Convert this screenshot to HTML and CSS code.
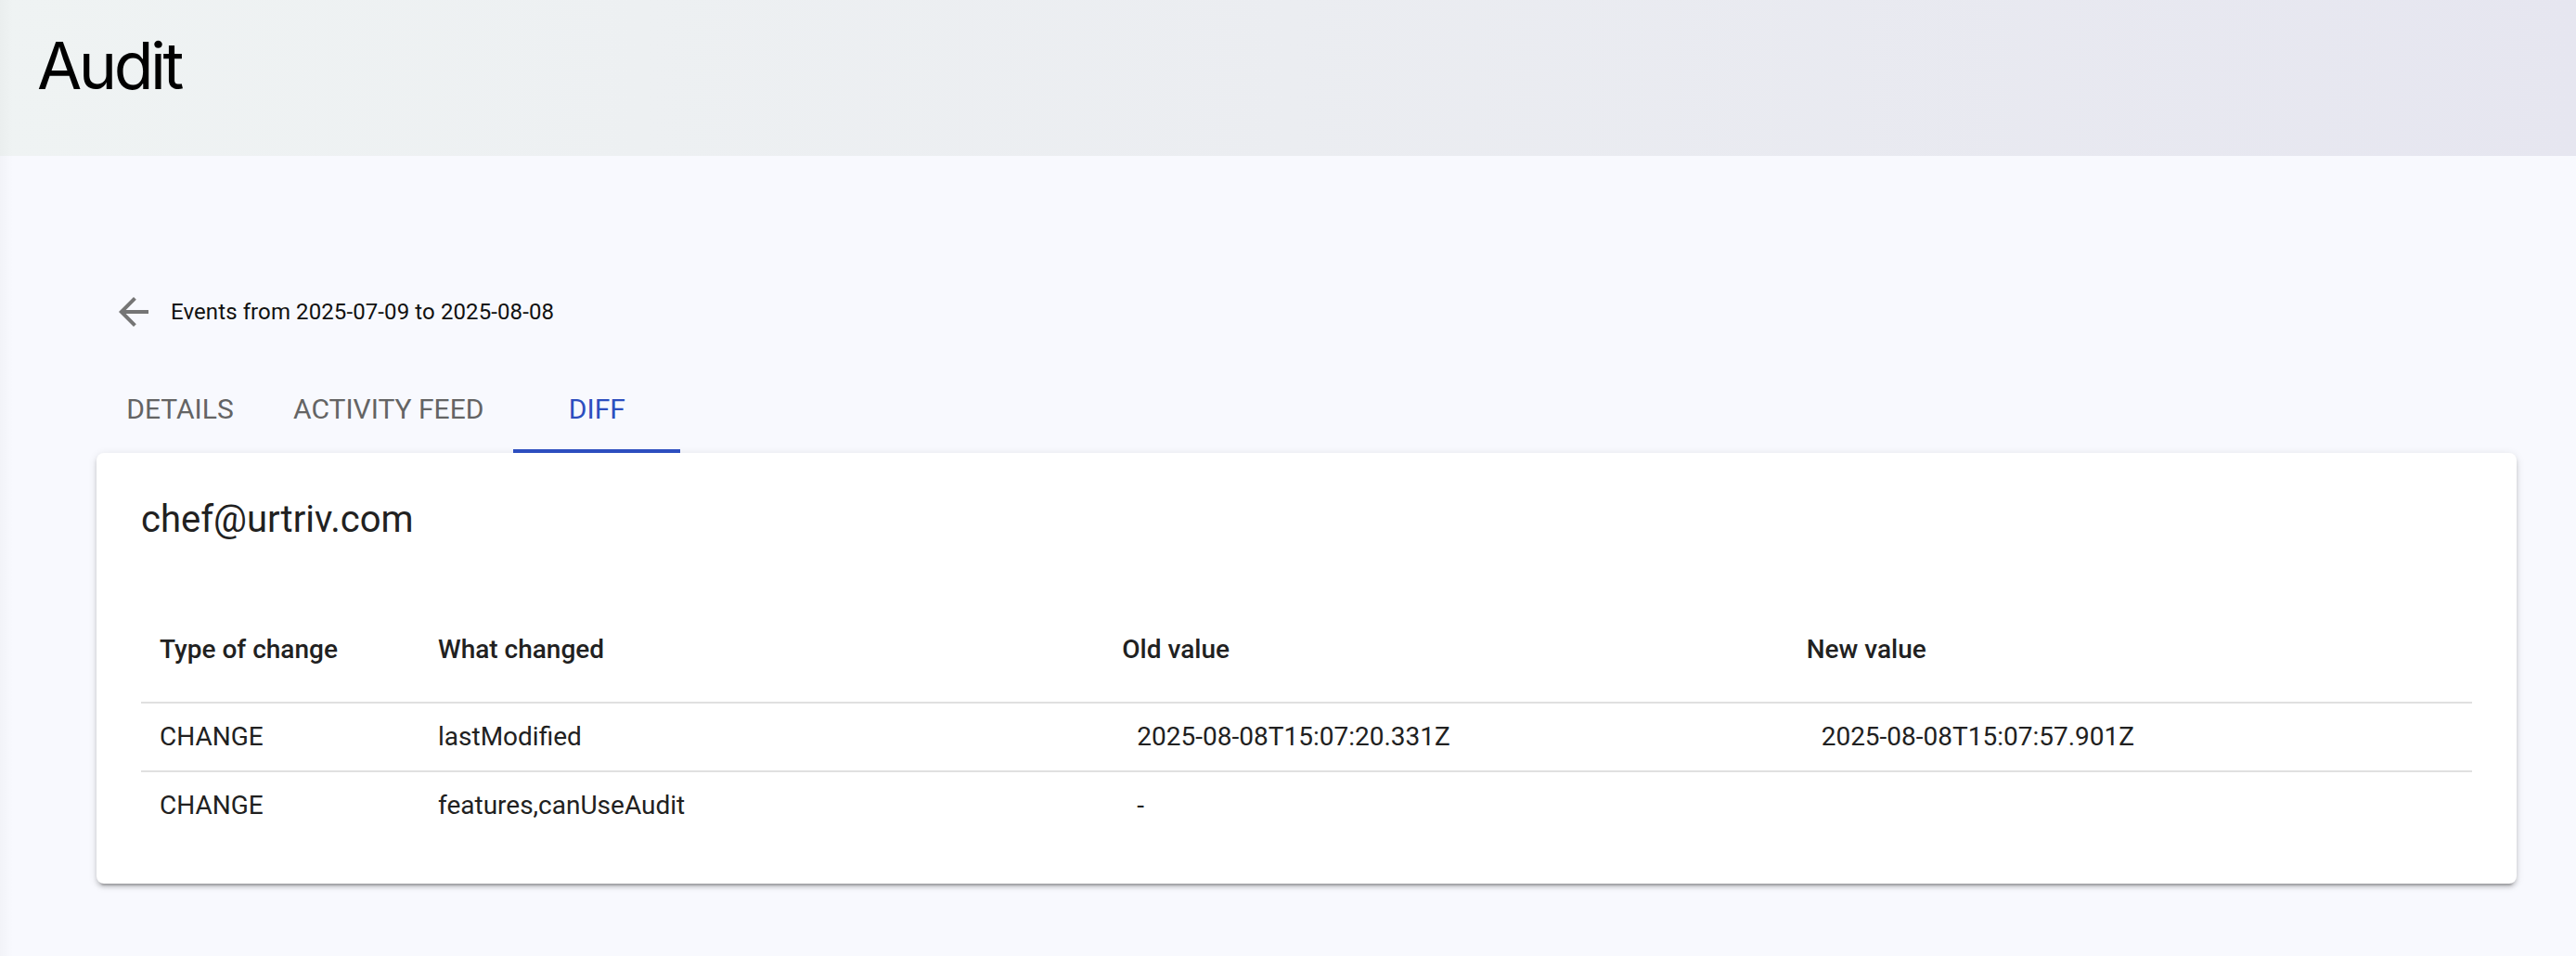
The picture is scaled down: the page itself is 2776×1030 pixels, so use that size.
FILE: index.html
```html
<!DOCTYPE html>
<html lang="en">
<head>
	<meta charset="UTF-8">
	<title>Audit</title>
	<link rel="stylesheet" href="styles.css">
</head>
<body>
	<!-- page header -->
	<header class="page-header">
		<h1 class="page-title">Audit</h1>
	</header>

	<main class="content">
		<!-- back link + date range -->
		<div class="back-row">
			<a class="back-btn" href="#">
				<svg viewBox="0 0 24 24" width="48" height="48"><path d="M20 11H7.83l5.59-5.59L12 4l-8 8 8 8 1.41-1.41L7.83 13H20v-2z"/></svg>
			</a>
			<span class="range">Events from 2025-07-09 to 2025-08-08</span>
		</div>

		<!-- tabs -->
		<nav class="tabs">
			<a class="tab" href="#">DETAILS</a>
			<a class="tab" href="#">ACTIVITY FEED</a>
			<a class="tab active" href="#">DIFF</a>
		</nav>

		<!-- diff card -->
		<section class="card">
			<h2 class="card-title">chef@urtriv.com</h2>
			<table class="diff-table">
				<colgroup>
					<col class="col-type">
					<col>
					<col>
					<col>
				</colgroup>
				<thead>
					<tr>
						<th>Type of change</th>
						<th>What changed</th>
						<th>Old value</th>
						<th>New value</th>
					</tr>
				</thead>
				<tbody>
					<tr>
						<td>CHANGE</td>
						<td>lastModified</td>
						<td><span class="value">2025-08-08T15:07:20.331Z</span></td>
						<td><span class="value">2025-08-08T15:07:57.901Z</span></td>
					</tr>
					<tr>
						<td>CHANGE</td>
						<td>features,canUseAudit</td>
						<td><span class="value">-</span></td>
						<td><span class="value"></span></td>
					</tr>
				</tbody>
			</table>
		</section>
	</main>
</body>
</html>
```

FILE: styles.css
```css
body{
	margin:0;
	padding:0;
	font-family: Roboto, "Liberation Sans", sans-serif;
	color:#212121;
	background:
		linear-gradient(to right, rgba(0,0,0,.025) 0, rgba(0,0,0,0) 14px),
		#f8f9fe;
	min-height:100vh;
}
a{
	text-decoration:none;
	color:inherit;
}

/* top bar */
.page-header{
	height:168px;
	box-sizing:border-box;
	padding:29px 40px 0;
	background:
		linear-gradient(to right, rgba(0,0,0,.02) 0, rgba(0,0,0,0) 14px),
		linear-gradient(to right, #eff3f3 0%, #ebedf1 50%, #e6e6f0 100%);
}
.page-title{
	margin:0;
	font-family: Inter, "Noto Sans", sans-serif;
	font-weight:400;
	font-size:70px;
	line-height:84px;
	letter-spacing:-3.5px;
	color:#000;
}

.content{
	padding:144px 64px 40px 104px;
}

/* back row */
.back-row{
	display:flex;
	align-items:center;
	height:48px;
}
.back-btn{
	display:flex;
	width:48px;
	height:48px;
	margin-left:16px;
	fill:#757575;
}
.range{
	margin-left:16px;
	font-size:24px;
	letter-spacing:.1px;
	color:#111;
}

/* tabs */
.tabs{
	display:flex;
	margin-top:32px;
	height:96px;
}
.tab{
	display:flex;
	align-items:center;
	justify-content:center;
	box-sizing:border-box;
	min-width:180px;
	padding:0 32px;
	font-size:30px;
	color:#646464;
	border-bottom:4px solid transparent;
	padding-top:4px;
}
.tab.active{
	color:#2d4ebf;
	border-bottom-color:#2d4ebf;
}

/* card */
.card{
	background:#fff;
	border-radius:8px;
	padding:48px;
	box-shadow:
		0 6px 2px -4px rgba(0,0,0,.2),
		0 4px 4px 0 rgba(0,0,0,.14),
		0 2px 10px 0 rgba(0,0,0,.12);
}
.card-title{
	margin:0 0 60px;
	font-size:40px;
	line-height:48px;
	font-weight:400;
	color:#212121;
}

.diff-table{
	width:100%;
	table-layout:fixed;
	border-collapse:separate;
	border-spacing:0;
	font-size:28px;
}
.col-type{
	width:300px;
}
.diff-table th,
.diff-table td{
	text-align:left;
	padding:20px;
	line-height:32px;
	border-bottom:2px solid #e0e0e0;
	white-space:nowrap;
}
.diff-table th{
	padding-top:40px;
	padding-bottom:40px;
	font-weight:500;
	color:#212121;
}
.diff-table tbody tr:last-child td{
	border-bottom:none;
}
.value{
	padding-left:16px;
}
```
